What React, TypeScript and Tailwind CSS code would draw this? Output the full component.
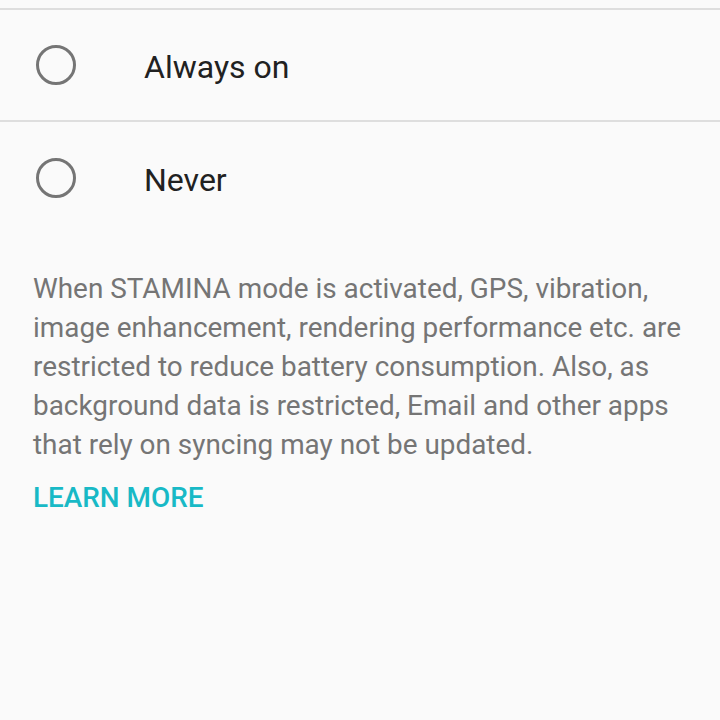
const options = ["Always on", "Never"];

const Radio = () => (
  <div className="w-10 h-10 rounded-full border-[3.5px] border-[#757575] shrink-0" />
);

export default function App() {
  return (
    <div
      className="w-[720px] h-[720px] bg-[#fafafa] overflow-hidden"
      style={{ fontFamily: "Roboto, 'Noto Sans', sans-serif" }}
    >
      <div className="h-2" />
      <div className="border-t-2 border-[#dedede]">
        {options.map((label, i) => (
          <div
            key={label}
            className={
              i === 0
                ? "h-[112px] flex items-center pl-9 border-b-2 border-[#dedede]"
                : "h-[112px] flex items-center pl-9"
            }
          >
            <Radio />
            <span className="ml-[68px] pt-[4px] text-[32px] text-[#212121] leading-none">
              {label}
            </span>
          </div>
        ))}
      </div>

      <div className="px-[33px] pt-[35px]">
        <p className="text-[27.9px] leading-[39px] text-[#757575]">
          When STAMINA mode is activated, GPS, vibration, image enhancement, rendering
          performance etc. are restricted to reduce battery consumption. Also, as
          background data is restricted, Email and other apps that rely on syncing may
          not be updated.
        </p>
        <div className="mt-[14px] text-[27.9px] leading-[39px] font-medium text-[#18b9c6]">
          LEARN MORE
        </div>
      </div>
    </div>
  );
}
